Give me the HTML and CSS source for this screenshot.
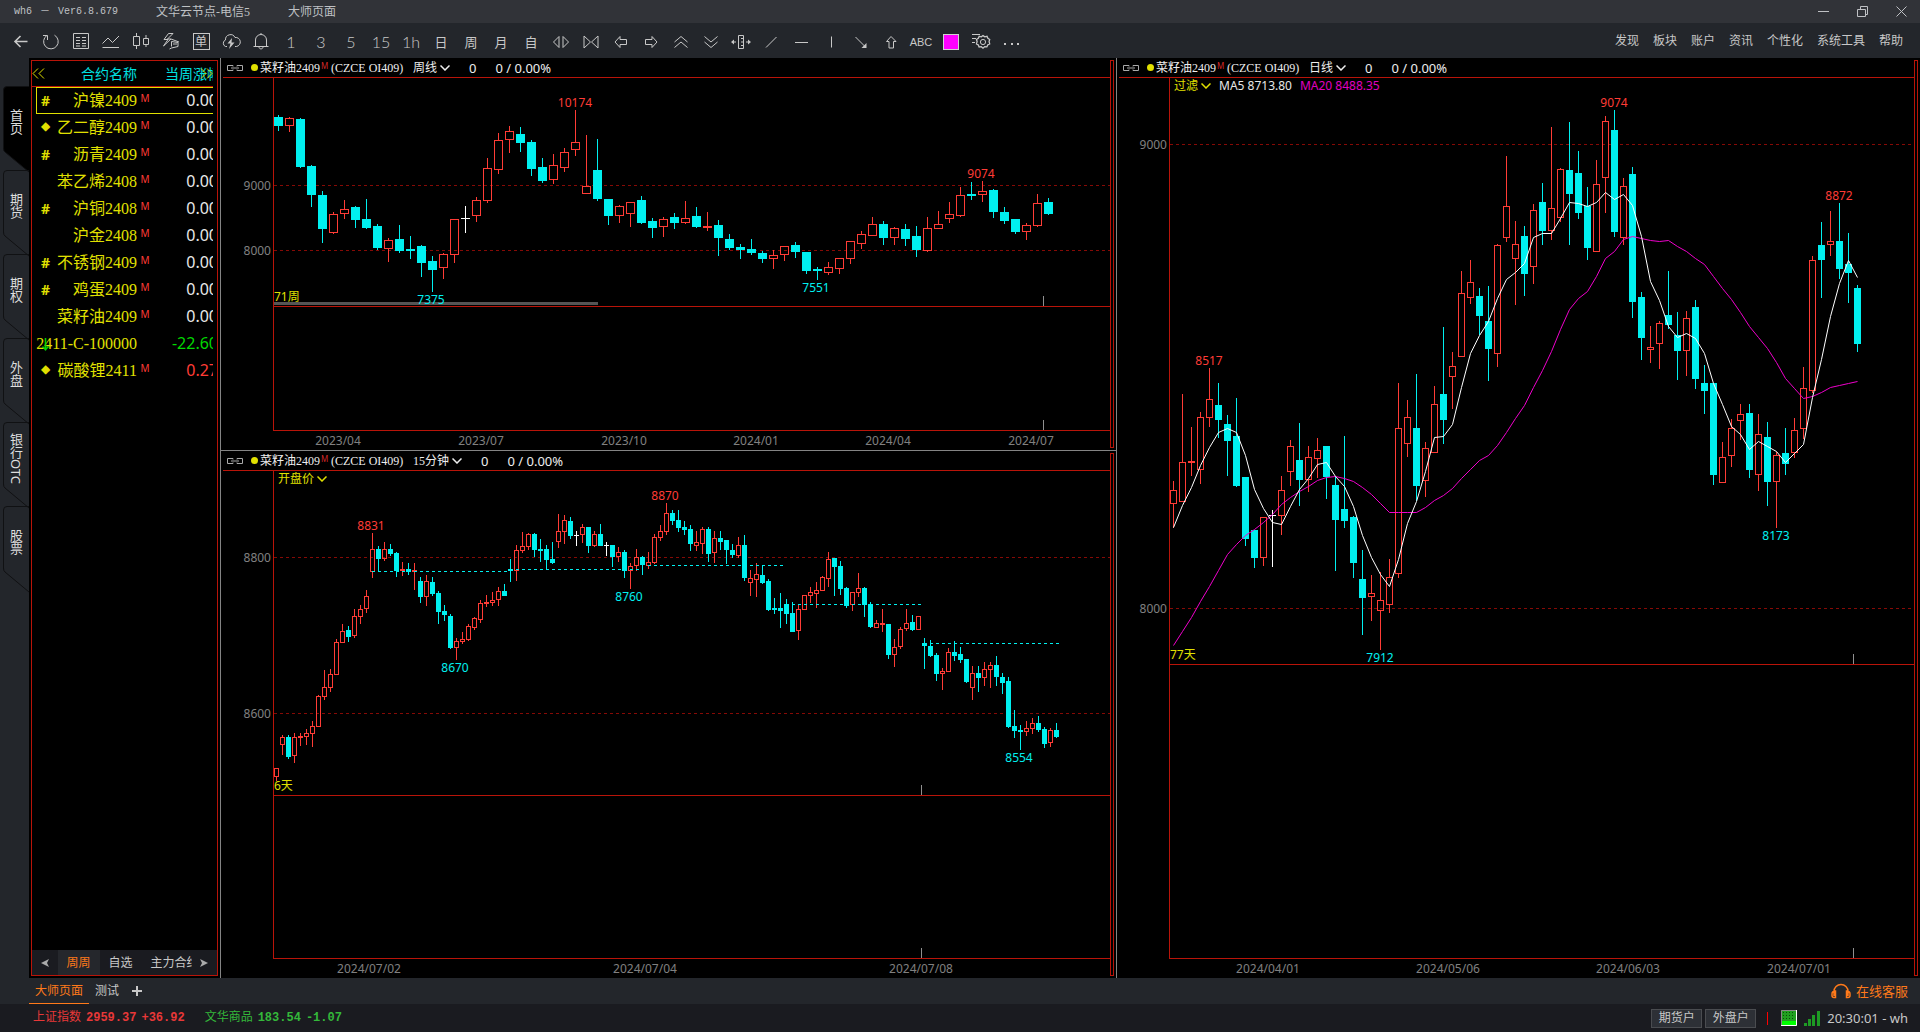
FILE: index.html
```html
<!DOCTYPE html>
<html lang="zh-CN">
<head>
<meta charset="utf-8">
<title>wh6 - 大师页面</title>
<link rel="stylesheet" href="styles.css">
</head>
<body>
<header class="titlebar">
  <div class="version"><span>wh6</span><span>－</span><span>Ver6.8.679</span></div>
  <div class="node">文华云节点-电信5</div>
  <div class="page-name">大师页面</div>
  <div class="window-buttons">
    <button aria-label="最小化"><svg viewBox="0 0 15 15"><path d="M2 7.500h11"/></svg></button>
    <button aria-label="还原"><svg viewBox="0 0 15 15"><path d="M2.500 5.500h8v7h-8zM5.500 5V2.500h7v8H11"/></svg></button>
    <button aria-label="关闭"><svg viewBox="0 0 15 15"><path d="M2.500 2.500l10 10M12.500 2.500l-10 10"/></svg></button>
  </div>
</header>

<div class="toolbar">
  <div class="tools">
    <button aria-label="返回"><svg viewBox="0 0 20 20"><path stroke-width="1.600" d="M16.500 9.500H4M9.500 4L4 9.500L9.500 15"/></svg></button>
    <button aria-label="刷新"><svg viewBox="0 0 20 20"><path d="M13.500 3.200A7.300 7.300 0 1 1 6 3.400M2 3.500h4.500V8"/></svg></button>
    <button aria-label="报价"><svg viewBox="0 0 20 20"><path d="M2.500 1.500h15v15h-15zM5 5.500h4M11 5.500h4M5 8.500h4M11 8.500h4M5 11.500h4M11 11.500h4M5 14h4M11 14h4"/></svg></button>
    <button aria-label="分时"><svg viewBox="0 0 20 20"><path d="M1.500 11.500L7 6l4.500 4.500L18 4M1.500 15.500H18"/></svg></button>
    <button aria-label="K线"><svg viewBox="0 0 20 20"><path d="M2.500 4.500h6v9h-6zM5.500 1v3.500M5.500 13.500V17M12.500 6.500h5v6h-5zM15 3v3.500M15 12.500V15"/></svg></button>
    <button aria-label="闪电下单"><svg viewBox="0 0 20 20"><path d="M7.500 1.500L3 7.500h4l-4.500 6.500L10 7H6.500L12 1.500zM10 7l8 3M10.500 9.500v5M10.500 9.500l6.500 1v4l-6.500 1.500-2 1M12 12h4"/></svg></button>
    <button aria-label="下单"><span class="boxed">单</span></button>
    <button aria-label="云条件单"><svg viewBox="0 0 20 20"><path d="M6 14.500H4.500A3.500 3.500 0 0 1 4.500 8A5 5 0 0 1 14 5.500A4.300 4.300 0 0 1 15.500 14.500H14"/><path class="solid" d="M11 6L6.500 11.500h3L8 17l5.500-6.500h-3z"/></svg></button>
    <button aria-label="提醒"><svg viewBox="0 0 20 20"><path d="M10 1v1.500M4.500 14V8a5.500 5.500 0 0 1 11 0v6M2.500 14.500h15M8 15c0 2.500 4 2.500 4 0"/></svg></button>
    <button class="latin">1</button>
    <button class="latin">3</button>
    <button class="latin">5</button>
    <button class="latin">15</button>
    <button class="latin">1h</button>
    <button class="hanzi">日</button>
    <button class="hanzi">周</button>
    <button class="hanzi">月</button>
    <button class="hanzi">自</button>
    <button aria-label="放宽"><svg viewBox="0 0 20 20"><path d="M8 4.500L2.500 10L8 15.500zM12 4.500l5.500 5.500-5.500 5.500z"/></svg></button>
    <button aria-label="缩窄"><svg viewBox="0 0 20 20"><path d="M3 4v12l6.500-6zM17 4v12l-6.500-6z"/></svg></button>
    <button aria-label="左移"><svg viewBox="0 0 20 20"><path d="M9 4.500L4 10l5 5.500v-3h6.500v-5H9z"/></svg></button>
    <button aria-label="右移"><svg viewBox="0 0 20 20"><path d="M11 4.500l5 5.500-5 5.500v-3H4.500v-5H11z"/></svg></button>
    <button aria-label="放大"><svg viewBox="0 0 20 20"><path d="M3.500 10L10 4.500l6.500 5.500M3.500 15.500L10 10l6.500 5.500"/></svg></button>
    <button aria-label="缩小"><svg viewBox="0 0 20 20"><path d="M3.500 4.500L10 10l6.500-5.500M3.500 10l6.500 5.500 6.500-5.500"/></svg></button>
    <button aria-label="尺子"><svg viewBox="0 0 20 20"><path d="M7.500 3.500h5v13h-5zM10 6.500h2M10 10h2M10 13.500h2M5 10H1M15 10h4"/><path class="solid" d="M0 10l3-2.500v5zM20 10l-3-2.500v5z"/></svg></button>
    <button aria-label="斜线"><svg viewBox="0 0 20 20"><path d="M5 15.500L15.500 5"/></svg></button>
    <button aria-label="水平线"><svg viewBox="0 0 20 20"><path d="M4 10.500h13"/></svg></button>
    <button aria-label="垂直线"><svg viewBox="0 0 20 20"><path d="M10.500 4.500v11"/></svg></button>
    <button aria-label="箭头线"><svg viewBox="0 0 20 20"><path d="M4.500 5L14 14.500"/><path class="solid" d="M15.500 11v5h-5z"/></svg></button>
    <button aria-label="上箭头"><svg viewBox="0 0 20 20"><path d="M10 4.500L5.500 9.500H8v6.500h4.500V9.500H15z"/></svg></button>
    <button class="abc">ABC</button>
    <button aria-label="颜色"><span class="swatch"></span></button>
    <button aria-label="设置"><svg viewBox="0 0 20 20"><path d="M1 2.500h8M1 6.500h4M1 10.500h3"/><path stroke-width="1.300" d="M12 3.600l1.800 1.200 2.200-.5.900 2 1.800 1.200-.6 2.100.6 2.300-2 1-.8 2-2.200-.3L12 16.200l-1.700-1.500-2.200.3-.8-2-1.800-1.100.6-2.300-.6-2.100 1.800-1.200.9-2 2.200.5z"/><circle cx="12" cy="10" r="2.600"/></svg></button>
    <button aria-label="更多"><svg viewBox="0 0 20 20"><path class="solid" d="M3 11h2v2H3zM10 11h2v2h-2zM16 11h2v2h-2z"/></svg></button>
  </div>
  <nav class="menu">
    <a href="#">发现</a><a href="#">板块</a><a href="#">账户</a><a href="#">资讯</a><a href="#">个性化</a><a href="#">系统工具</a><a href="#">帮助</a>
  </nav>
</div>

<main class="workspace">
  <nav class="side-tabs">
    <button class="side-tab active"><svg viewBox="0 0 26 88"><path d="M26 86L2 66Q.5 65 .5 62V4Q.5 .5 4 .5H26"/></svg><span>首页</span></button>
    <button class="side-tab"><svg viewBox="0 0 26 88"><path d="M26 86L2 66Q.5 65 .5 62V4Q.5 .5 4 .5H26"/></svg><span>期货</span></button>
    <button class="side-tab"><svg viewBox="0 0 26 88"><path d="M26 86L2 66Q.5 65 .5 62V4Q.5 .5 4 .5H26"/></svg><span>期权</span></button>
    <button class="side-tab"><svg viewBox="0 0 26 88"><path d="M26 86L2 66Q.5 65 .5 62V4Q.5 .5 4 .5H26"/></svg><span>外盘</span></button>
    <button class="side-tab"><svg viewBox="0 0 26 88"><path d="M26 86L2 66Q.5 65 .5 62V4Q.5 .5 4 .5H26"/></svg><span>银行OTC</span></button>
    <button class="side-tab"><svg viewBox="0 0 26 88"><path d="M26 86L2 66Q.5 65 .5 62V4Q.5 .5 4 .5H26"/></svg><span>股票</span></button>
  </nav>

  <aside class="watchlist">
    <div class="watch-frame">
      <div class="quotes-clip">
        <table class="quotes">
          <colgroup><col class="c-name"><col class="c-main"><col class="c-value"></colgroup>
          <thead><tr><th>合约名称</th><th></th><th class="change">当周涨幅</th></tr></thead>
          <tbody>
            <tr class="selected"><td><i>#</i>沪镍2409</td><td>M</td><td>0.00</td></tr>
            <tr><td><i class="diamond">◆</i>乙二醇2409</td><td>M</td><td>0.00</td></tr>
            <tr><td><i>#</i>沥青2409</td><td>M</td><td>0.00</td></tr>
            <tr><td>苯乙烯2408</td><td>M</td><td>0.00</td></tr>
            <tr><td><i>#</i>沪铜2408</td><td>M</td><td>0.00</td></tr>
            <tr><td>沪金2408</td><td>M</td><td>0.00</td></tr>
            <tr><td><i>#</i>不锈钢2409</td><td>M</td><td>0.00</td></tr>
            <tr><td><i>#</i>鸡蛋2409</td><td>M</td><td>0.00</td></tr>
            <tr><td>菜籽油2409</td><td>M</td><td>0.00</td></tr>
            <tr class="down"><td><i>↓</i>2411-C-100000</td><td></td><td>-22.60</td></tr>
            <tr class="up"><td><i class="diamond">◆</i>碳酸锂2411</td><td>M</td><td>0.27</td></tr>
          </tbody>
        </table>
        <button class="page-left" aria-label="上一列"><svg viewBox="0 0 13 11"><path d="M6 .5l-5 5 5 5M12 .5l-5 5 5 5"/></svg></button>
        <button class="page-right" aria-label="下一列"><svg viewBox="0 0 13 11"><path d="M1 .5l5 5-5 5M7 .5l5 5-5 5"/></svg></button>
      </div>
      <div class="list-tabs">
        <button class="scroll" aria-label="向左"><svg viewBox="0 0 8 10"><path d="M8 1L0 5l8 4-2-4z"/></svg></button>
        <button class="active">周周</button>
        <button>自选</button>
        <button class="cut">主力合约</button>
        <button class="scroll" aria-label="向右"><svg viewBox="0 0 8 10"><path d="M0 1l8 4-8 4 2-4z"/></svg></button>
      </div>
    </div>
  </aside>

  <div class="pane-column">
    <section class="pane pane-week" data-chart="week">
      <div class="pane-body">
        <header class="pane-head">
          <svg class="link" viewBox="0 0 16 6"><path d="M6 1.500V.5H.5v5H6V4.500M10 1.500V.5h5.500v5H10V4.500M4 3h8"/></svg>
          <span class="dot"></span><span class="contract">菜籽油2409</span><sup>M</sup><span class="code">(CZCE OI409)</span>
          <label class="pick"><select aria-label="周期"><option>周线</option></select><svg viewBox="0 0 10 6"><path d="M.5 .5L5 5L9.500 .5"/></svg></label>
          <span class="num">0</span><span class="num">0 / 0.00%</span>
        </header>
        <div class="price"><span class="scroll-thumb"></span><svg></svg><span class="span-note">71周</span></div>
        <div class="sub"></div>
        <div class="dates"><svg></svg></div>
      </div>
      <div class="rail"></div>
    </section>
    <section class="pane pane-minute" data-chart="minute">
      <div class="pane-body">
        <header class="pane-head">
          <svg class="link" viewBox="0 0 16 6"><path d="M6 1.500V.5H.5v5H6V4.500M10 1.500V.5h5.500v5H10V4.500M4 3h8"/></svg>
          <span class="dot"></span><span class="contract">菜籽油2409</span><sup>M</sup><span class="code">(CZCE OI409)</span>
          <label class="pick"><select aria-label="周期"><option>15分钟</option></select><svg viewBox="0 0 10 6"><path d="M.5 .5L5 5L9.500 .5"/></svg></label>
          <span class="num">0</span><span class="num">0 / 0.00%</span>
        </header>
        <div class="price"><svg></svg>
          <div class="indicators"><label class="pick"><select aria-label="指标"><option>开盘价</option></select><svg viewBox="0 0 10 6"><path d="M.5 .5L5 5L9.500 .5"/></svg></label></div>
          <span class="span-note">6天</span></div>
        <div class="sub"></div>
        <div class="dates"><svg></svg></div>
      </div>
      <div class="rail"></div>
    </section>
  </div>

  <section class="pane pane-day" data-chart="day">
    <div class="pane-body">
      <header class="pane-head">
        <svg class="link" viewBox="0 0 16 6"><path d="M6 1.500V.5H.5v5H6V4.500M10 1.500V.5h5.500v5H10V4.500M4 3h8"/></svg>
        <span class="dot"></span><span class="contract">菜籽油2409</span><sup>M</sup><span class="code">(CZCE OI409)</span>
        <label class="pick"><select aria-label="周期"><option>日线</option></select><svg viewBox="0 0 10 6"><path d="M.5 .5L5 5L9.500 .5"/></svg></label>
        <span class="num">0</span><span class="num">0 / 0.00%</span>
      </header>
      <div class="price"><svg></svg>
        <div class="indicators"><label class="pick"><select aria-label="指标"><option>过滤</option></select><svg viewBox="0 0 10 6"><path d="M.5 .5L5 5L9.500 .5"/></svg></label><span class="ma5">MA5 8713.80</span><span class="ma20">MA20 8488.35</span></div>
        <span class="span-note">77天</span></div>
      <div class="sub"></div>
      <div class="dates"><svg></svg></div>
    </div>
    <div class="rail"></div>
  </section>
</main>

<nav class="page-tabs">
  <button class="active">大师页面</button>
  <button>测试</button>
  <button class="add" aria-label="新建页面"><svg viewBox="0 0 10 10"><path d="M5 0v10M0 5h10"/></svg></button>
  <a href="#" class="service"><svg viewBox="0 0 20 16"><path d="M3 13V8.500a7 7 0 0 1 14 0V13M4.500 8v6.500H3A2 2 0 0 1 1 12.500V11Q1 8 4.500 8zM15.500 8v6.500H17A2 2 0 0 0 19 12.500V11Q19 8 15.500 8z"/></svg>在线客服</a>
</nav>

<footer class="status">
  <div class="index rise">上证指数<b>2959.37</b><b>+36.92</b></div>
  <div class="index fall">文华商品<b>183.54</b><b>-1.07</b></div>
  <div class="status-right">
    <button>期货户</button><button>外盘户</button>
    <span class="divider"></span>
    <svg class="net" viewBox="0 0 16 16"><path fill="#20a020" d="M0 0h16v16H0z"/><path fill="#00ff00" d="M0 11h15v4H0z"/><path stroke="#0a4a0a" stroke-width="1" stroke-dasharray="1 2" d="M2 2.500h12M2 5.500h12M2 8.500h12"/><path stroke="#888" fill="none" d="M.5 15V.5H15"/><path stroke="#fff" fill="none" d="M0 15.500h15.500V0"/></svg>
    <svg class="signal" viewBox="0 0 16 16"><path fill="#1e9a24" d="M0 13h3v3H0zM4 9h3v7H4zM8 5h3v11H8zM13 1h3v15h-3z"/></svg>
    <span class="clock">20:30:01 - wh</span>
  </div>
</footer>
<script src="script.js"></script>
</body>
</html>
```
FILE: styles.css
```css
:root {
  --bar: #23262b;
  --frame: #b91409;
  --rise: #ff3c36;
  --fall: #00f0f0;
  --yellow: #e0e000;
  --ink: #c8c8c8;
  --song: "Liberation Serif", "Noto Sans CJK SC", serif;
  --sans: "Noto Sans", "Noto Sans CJK SC", sans-serif;
}
* { box-sizing: border-box; }
body {
  margin: 0;
  min-height: 100vh;
  display: flex;
  flex-direction: column;
  background: var(--bar);
  color: var(--ink);
  font: 12px/16px var(--song);
  overflow: hidden;
}
button, select {
  appearance: none;
  border: 0;
  padding: 0;
  margin: 0;
  background: none;
  color: inherit;
  font: inherit;
}
a { color: inherit; text-decoration: none; }
svg { display: block; fill: none; stroke: currentColor; }
svg text { stroke: none; font: 12px var(--sans); }
.solid { fill: currentColor; stroke: none; }

/* title bar */
.titlebar {
  height: 23px;
  flex: none;
  display: flex;
  align-items: center;
  padding: 0 11px 0 14px;
  background: #313338;
  color: #bfc1c4;
}
.version { display: flex; gap: 8px; width: 142px; font: 10px/16px "Liberation Mono", "Noto Sans CJK SC", monospace; }
.node { width: 132px; }
.window-buttons { margin-left: auto; display: flex; gap: 24px; }
.window-buttons svg { width: 15px; height: 15px; }

/* toolbar */
.toolbar {
  height: 35px;
  flex: none;
  display: flex;
  align-items: center;
  justify-content: space-between;
  padding: 2px 17px 0 6px;
}
.tools { display: flex; }
.tools button { width: 30px; height: 24px; display: grid; place-items: center; }
.tools svg { width: 20px; height: 20px; }
.tools .latin { font: 300 16px/24px Lato, sans-serif; }
.tools .hanzi { font: 13px/24px "Noto Sans CJK SC", sans-serif; }
.tools .abc { font: 11px/24px "Liberation Sans", sans-serif; }
.boxed { width: 17px; height: 17px; border: 1px solid; font: 12px/14px "Noto Sans CJK SC", sans-serif; text-align: center; }
.swatch { width: 16px; height: 16px; background: #f0f; border: 1px solid #d0d0d0; }
.menu { display: flex; gap: 14px; padding-bottom: 2px; }

/* work area */
.workspace {
  flex: 1;
  display: grid;
  grid-template-columns: 29px 191px 896fr 804fr;
  background: #000;
}
.side-tabs { background: var(--bar); padding: 28px 0 0 3px; display: flex; flex-direction: column; }
.side-tab { position: relative; height: 84px; padding: 0 0 12px; color: #ddd; display: grid; place-items: center; }
.side-tab svg { position: absolute; left: 0; top: 0; width: 26px; height: 88px; stroke: #101113; }
.side-tab.active svg { fill: #000; }
.side-tab span { position: relative; writing-mode: vertical-rl; font: 13px/16px var(--sans); }

.watchlist { padding: 2px; display: flex; }
.watch-frame { flex: 1; min-width: 0; border: 1px solid var(--frame); display: flex; flex-direction: column; }
.quotes-clip { flex: 1; position: relative; overflow: hidden; margin-right: 4px; }
.quotes-clip::before { content: ""; position: absolute; left: 0; width: 190px; top: 25px; border-top: 1px solid var(--frame); }
.quotes { width: 186px; table-layout: fixed; border-collapse: collapse; }
.c-name { width: 105px; }
.c-main { width: 16px; }
.c-value { width: 65px; }
.quotes th { height: 26px; padding: 0; vertical-align: top; text-align: right; color: #00e0e0; font: 14px/24px "Noto Sans CJK SC", sans-serif; white-space: nowrap; }
.quotes .change { text-align: left; padding-left: 12px; }
.quotes td { height: 27px; padding: 0; text-align: right; color: #e8e8e8; font: 16px/27px var(--sans); white-space: nowrap; }
.quotes td:first-child { position: relative; color: var(--yellow); font: 16px/27px var(--song); }
.quotes td:nth-child(2) { color: var(--rise); font: 10px/12px var(--sans); vertical-align: top; text-align: center; padding-top: 5px; }
.quotes i { position: absolute; left: 6px; width: 15px; text-align: center; font: bold 14px/27px var(--sans); }
.quotes .diamond { font: 12px/25px "DejaVu Sans", sans-serif; }
.quotes .down td:last-child, .quotes .down i { color: #00d800; }
.quotes .up td:last-child { color: var(--rise); }
.selected td:first-child::after { content: ""; position: absolute; inset: 0 -90px 0 4px; border: 1px solid var(--yellow); }
.page-left, .page-right { position: absolute; top: 7px; left: 0; color: var(--yellow); }
.page-right { left: auto; right: 0; }
.page-left svg, .page-right svg { width: 13px; height: 11px; }

.list-tabs { height: 25px; flex: none; display: flex; background: #1a1b20; font-family: var(--sans); }
.list-tabs button { width: 42px; }
.list-tabs .active { color: #ff7a1a; background: #25272c; }
.list-tabs .scroll { flex: 1; display: grid; place-items: center; color: #aaa; }
.list-tabs .scroll svg { width: 8px; height: 10px; fill: currentColor; stroke: none; }
.list-tabs .cut { width: 50px; padding: 0 0 0 9px; overflow: hidden; white-space: nowrap; text-align: left; }

/* chart panes */
.pane-column { display: flex; flex-direction: column; }
.pane { display: flex; border-left: 1px solid #848484; }
.pane-week { flex: 392 1 0; }
.pane-minute { flex: 527 1 0; box-shadow: 0 -1px #848484; margin-top: 1px; }
.pane-body { flex: 1; display: grid; padding-left: 2px; }
.pane-week .pane-body { grid-template-rows: 20px 229fr 124fr 19px; }
.pane-minute .pane-body { grid-template-rows: 20px 325fr 163fr 19px; }
.pane-day .pane-body { grid-template-rows: 20px 587fr 294fr 19px; }
.rail { width: 4px; margin: 2px 2px 2px 0; border: 1px solid var(--frame); }
.pane-head { display: flex; align-items: center; border-bottom: 1px solid var(--frame); padding-left: 4px; color: #eee; white-space: nowrap; }
.link { width: 16px; height: 6px; margin-right: 8px; color: #aaa; }
.dot { width: 7px; height: 7px; border-radius: 50%; background: var(--yellow); margin-right: 2px; }
.pane-head sup { color: #d02828; font: 8px/12px var(--sans); margin: 0 3px 4px 1px; width: 7px; }
.code { width: 82px; }
.pick { display: flex; align-items: center; gap: 2px; }
.pick svg { width: 10px; height: 6px; stroke-width: 1.5; }
.num { font: 13px/16px var(--sans); margin-left: 19px; }
.price, .sub { margin-left: 50px; border-left: 1px solid var(--frame); border-bottom: 1px solid var(--frame); position: relative; }
.price > svg { position: absolute; width: 100%; height: 100%; overflow: visible; shape-rendering: crispEdges; }
.price::after, .sub::after { content: ""; position: absolute; bottom: 0; left: var(--tick); width: 1px; height: 10px; background: #909090; }
.pane-week { --tick: 769px; }
.pane-minute { --tick: 647px; }
.pane-day { --tick: 683px; }
.span-note { position: absolute; left: 0; bottom: 1px; color: var(--yellow); font-family: var(--sans); }
.scroll-thumb { position: absolute; left: 0; bottom: 1px; width: 324px; height: 3px; background: #555; }
.indicators { position: absolute; left: 4px; top: 0; display: flex; color: var(--yellow); font: 12px/16px var(--sans); }
.ma5 { color: #e8e8e8; margin-left: 8px; }
.ma20 { color: #e000c0; margin-left: 8px; }
.dates { margin-left: 51px; }
.dates svg { width: 100%; height: 19px; overflow: visible; }
.axis-text { fill: #808080; text-anchor: middle; }
.price .axis-text { text-anchor: end; }
.grid { stroke: #860a06; stroke-dasharray: 3 3; }
.open-line { stroke: var(--fall); stroke-dasharray: 3 3; }
.up-body { stroke: var(--rise); }
.up-fill { fill: var(--rise); stroke: none; }
.down-fill { fill: var(--fall); stroke: none; }
.flat-fill { fill: #fff; stroke: none; }
.high-text { fill: var(--rise); text-anchor: middle; }
.low-text { fill: var(--fall); text-anchor: middle; }
.line-ma5, .line-ma20 { shape-rendering: auto; }
.line-ma5 { stroke: #fff; }
.line-ma20 { stroke: #f000cc; }

/* page tabs */
.page-tabs { height: 26px; flex: none; display: flex; padding: 0 12px 0 29px; font-family: var(--sans); }
.page-tabs button { padding: 0 6px; }
.page-tabs .active { color: #ff7a1a; border-bottom: 1px solid; }
.page-tabs .add { padding: 0 7px; }
.page-tabs .add svg { width: 10px; height: 10px; stroke-width: 2; }
.service { margin-left: auto; display: flex; align-items: center; gap: 5px; color: #ff7a1a; font-size: 13px; }
.service svg { width: 20px; height: 16px; stroke-width: 1.500; }

/* status bar */
.status { height: 28px; flex: none; display: flex; align-items: center; gap: 20px; padding: 0 12px 0 33px; background: #1a1b20; }
.index { display: flex; gap: 5px; font: 12px/16px "Liberation Mono", "Noto Sans CJK SC", monospace; }
.rise { color: #e83838; }
.fall { color: #34b83a; }
.status-right { margin-left: auto; display: flex; align-items: center; font-family: var(--sans); }
.status-right button { width: 51px; height: 19px; line-height: 16px; border: 1px solid #4a4c50; background: #2d3036; margin-right: 3px; }
.divider { width: 1px; height: 13px; background: #f00; margin: 0 13px 0 8px; }
.net, .signal { width: 16px; height: 16px; stroke: none; margin-right: 7px; }
.clock { font-size: 13px; }
```
FILE: script.js
```js
// Bars: direction (u = rise, d = fall, f = flat), then high, body top, body bottom, low.
// Levels are counted downwards in ticks; each chart says how many ticks make a pixel.
const charts = {
  week: {
    base: 66, ticks: 3, first: 4, step: 11, body: 9,
    grid: [['9000', 107], ['8000', 172]],
    dates: [['2023/04', 64], ['2023/07', 207], ['2023/10', 350], ['2024/01', 482], ['2024/04', 614], ['2024/07', 757]],
    notes: [['high', '10174', 301, 29], ['low', '7375', 157, 226], ['low', '7551', 542, 214], ['high', '9074', 707, 100]],
    bars: `d 177 183 210 225|u 183 186 209 228|d 186 189 333 336|d 327 330 417 453|d 405 417 519 561|u 468 474 531 534
u 432 459 474 489|d 450 453 492 516|d 429 489 516 519|d 504 510 576 582|u 546 552 579 618|d 507 549 585 591
d 540 579 585 609|d 567 570 621 663|d 600 615 642 708|u 591 594 636 669|u 489 489 597 621|f 450 486 489 531
u 423 432 480 498|u 306 336 435 441|u 231 252 342 354|u 210 225 252 291|d 213 234 261 288|d 252 258 339 360
d 306 333 375 381|u 294 327 372 384|u 276 288 336 348|u 162 258 282 300|u 237 390 414 414|d 249 342 429 435
d 429 429 480 507|u 447 450 480 501|u 438 438 474 513|d 420 432 501 504|d 486 495 516 546|u 483 489 513 543
d 471 483 501 519|u 435 486 501 504|d 453 480 513 516|u 468 510 516 525|d 492 507 546 600|d 534 549 576 582
d 564 573 582 609|d 549 579 591 597|d 585 591 609 621|u 582 597 609 639|u 570 570 597 615|d 558 567 588 606
d 588 588 645 654|d 633 639 645 672|u 618 633 651 657|u 606 606 639 654|u 555 555 609 624|u 525 534 564 579
u 483 504 540 540|d 495 504 546 567|u 513 516 546 567|d 504 519 549 570|d 510 540 582 603|u 483 516 585 588
u 465 504 519 519|u 438 474 489 501|u 393 417 480 483|d 378 414 420 432|u 375 405 417 438|d 399 402 468 486
d 453 468 495 504|d 489 489 528 534|u 501 507 528 552|u 414 441 510 513|d 426 438 474 477`
  },
  minute: {
    base: 63, ticks: 3, first: 2, step: 6, body: 5,
    grid: [['8800', 86], ['8600', 242]],
    dates: [['2024/07/02', 95], ['2024/07/04', 371], ['2024/07/08', 647]],
    notes: [['high', '8831', 97, 59], ['low', '8670', 181, 201], ['low', '8760', 355, 130], ['high', '8870', 391, 29], ['low', '8554', 745, 291]],
    opens: [[98, 236, 100], [236, 368, 98], [374, 509, 94], [518, 647, 133], [656, 785, 172]],
    bars: `u 954 954 981 993|u 855 861 885 915|d 855 861 921 927|u 849 861 918 939|u 849 858 864 888|u 837 849 861 885
u 813 828 852 891|u 735 738 831 831|u 660 711 741 750|u 657 672 714 726|u 567 576 675 675|u 522 543 579 579
d 528 540 561 576|u 477 498 558 564|u 465 477 501 522|u 420 438 477 489|u 249 297 366 384|d 288 297 327 366
u 276 297 327 333|d 282 297 312 318|d 306 309 363 381|u 336 357 363 378|d 339 357 366 375|u 339 360 366 420
d 381 393 441 459|u 375 393 441 468|d 381 396 432 438|d 423 429 486 522|d 465 483 495 513|d 492 498 594 597
u 564 573 594 630|u 546 567 576 582|u 522 528 570 573|u 501 504 534 540|u 450 459 510 519|u 435 456 462 471
u 426 450 459 468|u 411 423 450 468|d 402 423 438 438|d 327 357 363 396|u 285 300 363 393|u 246 288 303 309
u 249 252 291 300|d 249 252 300 321|d 267 297 303 336|d 285 297 330 357|d 276 327 339 342|u 192 243 276 294
u 195 210 246 282|d 201 213 258 267|f 243 255 258 288|u 222 231 255 279|d 231 231 288 309|u 243 252 288 291
d 222 252 288 288|f 276 285 288 318|d 285 285 321 351|u 291 306 321 336|d 300 306 363 384|u 339 348 363 417
u 297 321 348 363|d 318 321 345 375|u 306 336 348 357|u 252 261 339 342|u 225 243 264 273|u 159 189 246 255
d 180 189 213 225|d 180 210 234 246|d 213 231 240 255|d 225 237 282 303|u 243 276 288 303|u 231 237 282 312
d 231 237 312 336|u 243 264 309 339|d 243 264 276 300|d 270 270 300 342|d 282 300 315 324|u 261 285 318 324
d 255 285 384 393|u 360 384 399 438|u 339 372 390 441|d 345 375 399 402|d 387 393 480 483|d 444 474 480 492
d 429 474 483 534|d 447 462 492 522|d 456 489 546 546|u 465 477 543 570|u 435 435 480 480|u 411 426 438 459
u 396 420 432 474|u 378 381 423 423|u 306 327 387 411|d 324 324 351 438|d 333 348 417 435|d 411 414 468 474
u 426 426 465 483|u 369 414 429 441|d 411 414 465 501|d 456 462 531 534|u 510 519 534 534|u 477 519 525 546
d 522 522 615 627|u 567 591 615 651|u 531 537 591 597|u 477 519 537 543|d 495 516 540 543|u 498 498 540 540
d 564 579 588 657|d 570 588 618 621|d 609 615 672 693|u 654 663 672 720|u 594 606 666 666|d 573 606 618 633
d 591 612 630 639|d 627 627 696 699|u 648 669 714 750|d 648 669 684 726|u 636 657 684 708|u 636 645 660 714
d 618 645 681 708|d 669 681 699 732|d 681 693 831 834|d 780 828 843 864|d 825 840 846 900|u 813 834 846 858
u 804 819 837 852|d 798 819 840 846|d 831 837 882 894|u 834 840 879 891|d 819 840 861 864`
  },
  day: {
    base: 55.6, ticks: 2.529, first: 3, step: 9, body: 7,
    grid: [['9000', 66], ['8000', 530]],
    dates: [['2024/04/01', 98], ['2024/05/06', 278], ['2024/06/03', 458], ['2024/07/01', 629]],
    notes: [['high', '8517', 39, 287], ['low', '7912', 210, 584], ['high', '9074', 444, 29], ['high', '8872', 669, 122], ['low', '8173', 606, 462]],
    bars: `u 1075 1098 1132 1193|u 855 1027 1127 1127|u 938 1024 1029 1062|u 900 913 1046 1082|u 789 867 915 938|d 827 883 921 966
d 908 931 973 1062|d 865 961 1087 1090|d 1065 1065 1221 1239|d 1199 1199 1270 1295|u 1166 1166 1270 1290|f 1148 1161 1163 1292
u 1062 1098 1163 1211|u 971 986 1052 1087|d 928 1022 1072 1138|u 986 1014 1072 1103|u 966 996 1019 1067|d 986 986 1065 1120
d 1062 1085 1173 1302|d 961 1146 1176 1193|d 1163 1166 1282 1320|d 1249 1323 1371 1464|u 1313 1358 1368 1429|u 1305 1376 1404 1502
u 1272 1318 1388 1409|u 827 941 1310 1320|u 870 913 981 1014|d 804 941 1087 1125|u 976 991 1075 1115|u 835 880 1004 1004
d 685 855 921 981|u 749 784 812 893|u 544 599 761 761|u 516 572 612 627|d 587 607 658 706|d 582 670 741 822
u 475 478 754 787|u 253 379 460 470|u 417 475 514 630|d 430 455 551 607|u 374 389 534 577|d 321 369 443 478
u 180 384 443 465|u 283 286 410 420|d 167 288 349 478|d 240 296 397 412|d 331 379 486 516|u 263 324 496 496
u 152 164 309 397|d 137 187 445 458|u 309 329 460 478|d 281 298 622 663|d 597 609 713 769|u 683 736 744 776
u 670 675 728 792|d 544 655 680 690|d 647 706 746 819|u 645 663 746 809|d 617 635 817 842|d 781 827 847 905
d 827 827 1060 1085|u 976 1014 1080 1080|u 918 941 1012 1039|u 880 905 923 971|d 880 903 1047 1067|u 905 956 1060 1100
d 926 964 1077 1138|u 1001 1009 1077 1194|d 941 1004 1032 1060|u 916 946 1004 1017|u 787 840 943 969|u 506 516 847 852
d 420 478 516 612|u 392 468 478 506|d 372 468 539 564|d 448 526 549 625|d 579 587 728 749`,
    lines: {
      ma20: [1489, 1453, 1418, 1378, 1340, 1300, 1260, 1233, 1212, 1195, 1178, 1157, 1133, 1115, 1100, 1088, 1072, 1064, 1062, 1066, 1074, 1090, 1108, 1130, 1154, 1154, 1152, 1152, 1141, 1122, 1110, 1092, 1067, 1045, 1022, 1010, 985, 950, 915, 882, 837, 793, 747, 690, 640, 613, 594, 556, 512, 492, 462, 454, 459, 466, 468, 466, 480, 492, 510, 525, 557, 586, 614, 647, 682, 711, 738, 773, 815, 840, 866, 861, 850, 838, 831, 826, 823],
      ma5: [1191, 1135, 1090, 1035, 988, 952, 940, 951, 1010, 1095, 1143, 1179, 1183, 1138, 1095, 1067, 1032, 1028, 1062, 1087, 1138, 1211, 1268, 1310, 1341, 1272, 1181, 1125, 1050, 963, 960, 930, 837, 750, 706, 670, 612, 565, 546, 524, 457, 448, 448, 410, 370, 371, 380, 368, 343, 362, 350, 377, 455, 570, 617, 683, 710, 700, 713, 752, 828, 880, 936, 955, 994, 974, 986, 1000, 1026, 1005, 982, 863, 765, 658, 573, 516, 560]
    }
  }
};

function add(svg, tag, cls, attrs, text) {
  const el = document.createElementNS('http://www.w3.org/2000/svg', tag);
  el.setAttribute('class', cls);
  for (const key in attrs) el.setAttribute(key, attrs[key]);
  if (text) el.textContent = text;
  svg.append(el);
}

function draw(pane) {
  const chart = charts[pane.dataset.chart];
  const svg = pane.querySelector('.price > svg');
  const level = v => Math.round((v - chart.base) / chart.ticks);
  const half = (chart.body - 1) / 2;

  for (const [price, y] of chart.grid) {
    add(svg, 'line', 'grid', { x1: 0, x2: '100%', y1: y + 0.5, y2: y + 0.5 });
    add(svg, 'text', 'axis-text', { x: -3, y: y + 5 }, price);
  }

  chart.bars.split(/[|\n]/).forEach((row, i) => {
    const [dir, ...values] = row.split(' ');
    const [high, top, bottom, low] = values.map(level);
    const x = chart.first + i * chart.step;
    const cls = { u: 'up-fill', d: 'down-fill', f: 'flat-fill' }[dir];
    const height = Math.max(1, bottom - top);
    if (top > high) add(svg, 'rect', cls, { x, y: high, width: 1, height: top - high });
    if (low > bottom) add(svg, 'rect', cls, { x, y: bottom, width: 1, height: low - bottom });
    if (dir === 'u' && height > 2) {
      add(svg, 'rect', 'up-body', { x: x - half + 0.5, y: top + 0.5, width: chart.body - 1, height: height - 1 });
    } else {
      add(svg, 'rect', cls, { x: x - half, y: top, width: chart.body, height });
    }
  });

  for (const [x1, x2, y] of chart.opens || []) {
    add(svg, 'line', 'open-line', { x1, x2, y1: y + 0.5, y2: y + 0.5 });
  }
  for (const name in chart.lines || {}) {
    const points = chart.lines[name].map((v, i) => `${chart.first + i * chart.step + 0.5},${level(v) + 0.5}`);
    add(svg, 'polyline', 'line-' + name, { points: points.join(' ') });
  }
  for (const [kind, text, x, y] of chart.notes) {
    add(svg, 'text', kind + '-text', { x, y }, text);
  }
  const dates = pane.querySelector('.dates svg');
  for (const [text, x] of chart.dates) add(dates, 'text', 'axis-text', { x, y: 14 }, text);
}

document.querySelectorAll('.pane').forEach(draw);
```
